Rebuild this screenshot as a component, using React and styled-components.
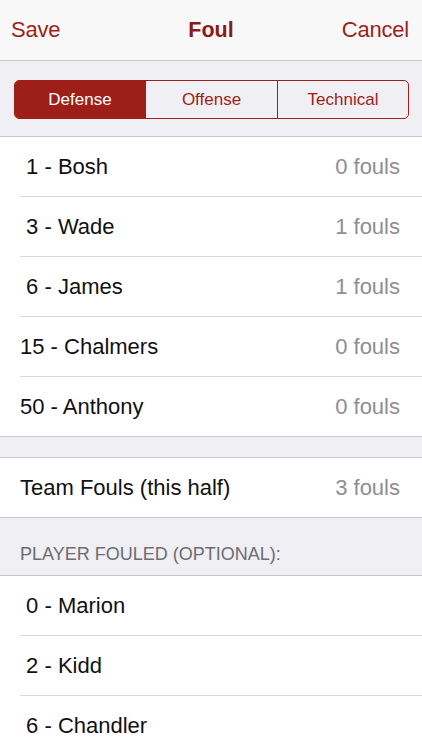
import React from "react";
import styled, { createGlobalStyle } from "styled-components";

const Global = createGlobalStyle`
  html, body { margin: 0; padding: 0; background: #efeff4; }
  body { font-family: "Liberation Sans", Arial, sans-serif; -webkit-font-smoothing: antialiased; }
  * { box-sizing: border-box; }
`;

const RED = "#9e1f1a";

const Screen = styled.div`
  width: 422px;
  height: 750px;
  overflow: hidden;
  background: #efeff4;
  display: flex;
  flex-direction: column;
`;

const NavBar = styled.div`
  height: 61px;
  flex: none;
  background: #f8f8f8;
  border-bottom: 1px solid #c8c7cc;
  display: flex;
  align-items: center;
  justify-content: space-between;
  padding: 0 13px 0 11px;
  position: relative;
`;

const NavButton = styled.span`
  font-size: 22px;
  color: ${RED};
  letter-spacing: -0.2px;
`;

const NavTitle = styled.span`
  position: absolute;
  left: 0;
  right: 0;
  text-align: center;
  font-size: 21.5px;
  font-weight: bold;
  color: #8c1a16;
  pointer-events: none;
`;

const SegmentArea = styled.div`
  flex: none;
  padding: 19px 13px 17px 14px;
  height: 75px;
`;

const Segmented = styled.div`
  display: grid;
  grid-template-columns: 130px 132px 1fr;
  height: 39px;
  border: 1px solid ${RED};
  border-radius: 5px;
  overflow: hidden;
`;

const Segment = styled.div`
  display: flex;
  align-items: center;
  justify-content: center;
  font-size: 17px;
  color: ${(p) => (p.$active ? "#fff" : RED)};
  background: ${(p) => (p.$active ? RED : "transparent")};
  border-left: ${(p) => (p.$first ? "none" : `1px solid ${RED}`)};
`;

const Group = styled.div`
  flex: none;
  background: #fff;
  border-top: 1px solid #c8c7cc;
  border-bottom: 1px solid #c8c7cc;
`;

const Row = styled.div`
  height: ${(p) => (p.$last ? "59px" : "60px")};
  margin-left: 20px;
  padding-right: 22px;
  display: flex;
  align-items: center;
  justify-content: space-between;
  border-bottom: ${(p) => (p.$last ? "none" : "1px solid #d9d9dd")};
`;

const Label = styled.span`
  font-size: 22px;
  color: #111;
  white-space: pre;
`;

const Value = styled.span`
  font-size: 22px;
  color: #8e8e93;
`;

const Spacer = styled.div`
  flex: none;
  height: ${(p) => p.$h}px;
`;

const SectionHeader = styled.div`
  flex: none;
  height: 57px;
  padding: 0 20px 10px;
  display: flex;
  align-items: flex-end;
  font-size: 18px;
  color: #6d6d72;
`;

const players = [
  ["\u00a01 - Bosh", "0 fouls"],
  ["\u00a03 - Wade", "1 fouls"],
  ["\u00a06 - James", "1 fouls"],
  ["15 - Chalmers", "0 fouls"],
  ["50 - Anthony", "0 fouls"],
];

const fouled = ["\u00a00 - Marion", "\u00a02 - Kidd", "\u00a06 - Chandler"];

export default function App() {
  return (
    <>
      <Global />
      <Screen>
        <NavBar>
          <NavButton>Save</NavButton>
          <NavTitle>Foul</NavTitle>
          <NavButton>Cancel</NavButton>
        </NavBar>
        <SegmentArea>
          <Segmented>
            <Segment $active $first>Defense</Segment>
            <Segment>Offense</Segment>
            <Segment>Technical</Segment>
          </Segmented>
        </SegmentArea>
        <Group>
          {players.map(([n, v], i) => (
            <Row key={n} $last={i === players.length - 1}>
              <Label>{n}</Label>
              <Value>{v}</Value>
            </Row>
          ))}
        </Group>
        <Spacer $h={20} />
        <Group>
          <Row $last>
            <Label>Team Fouls (this half)</Label>
            <Value>3 fouls</Value>
          </Row>
        </Group>
        <SectionHeader>PLAYER FOULED (OPTIONAL):</SectionHeader>
        <Group>
          {fouled.map((n) => (
            <Row key={n}>
              <Label>{n}</Label>
            </Row>
          ))}
        </Group>
      </Screen>
    </>
  );
}
